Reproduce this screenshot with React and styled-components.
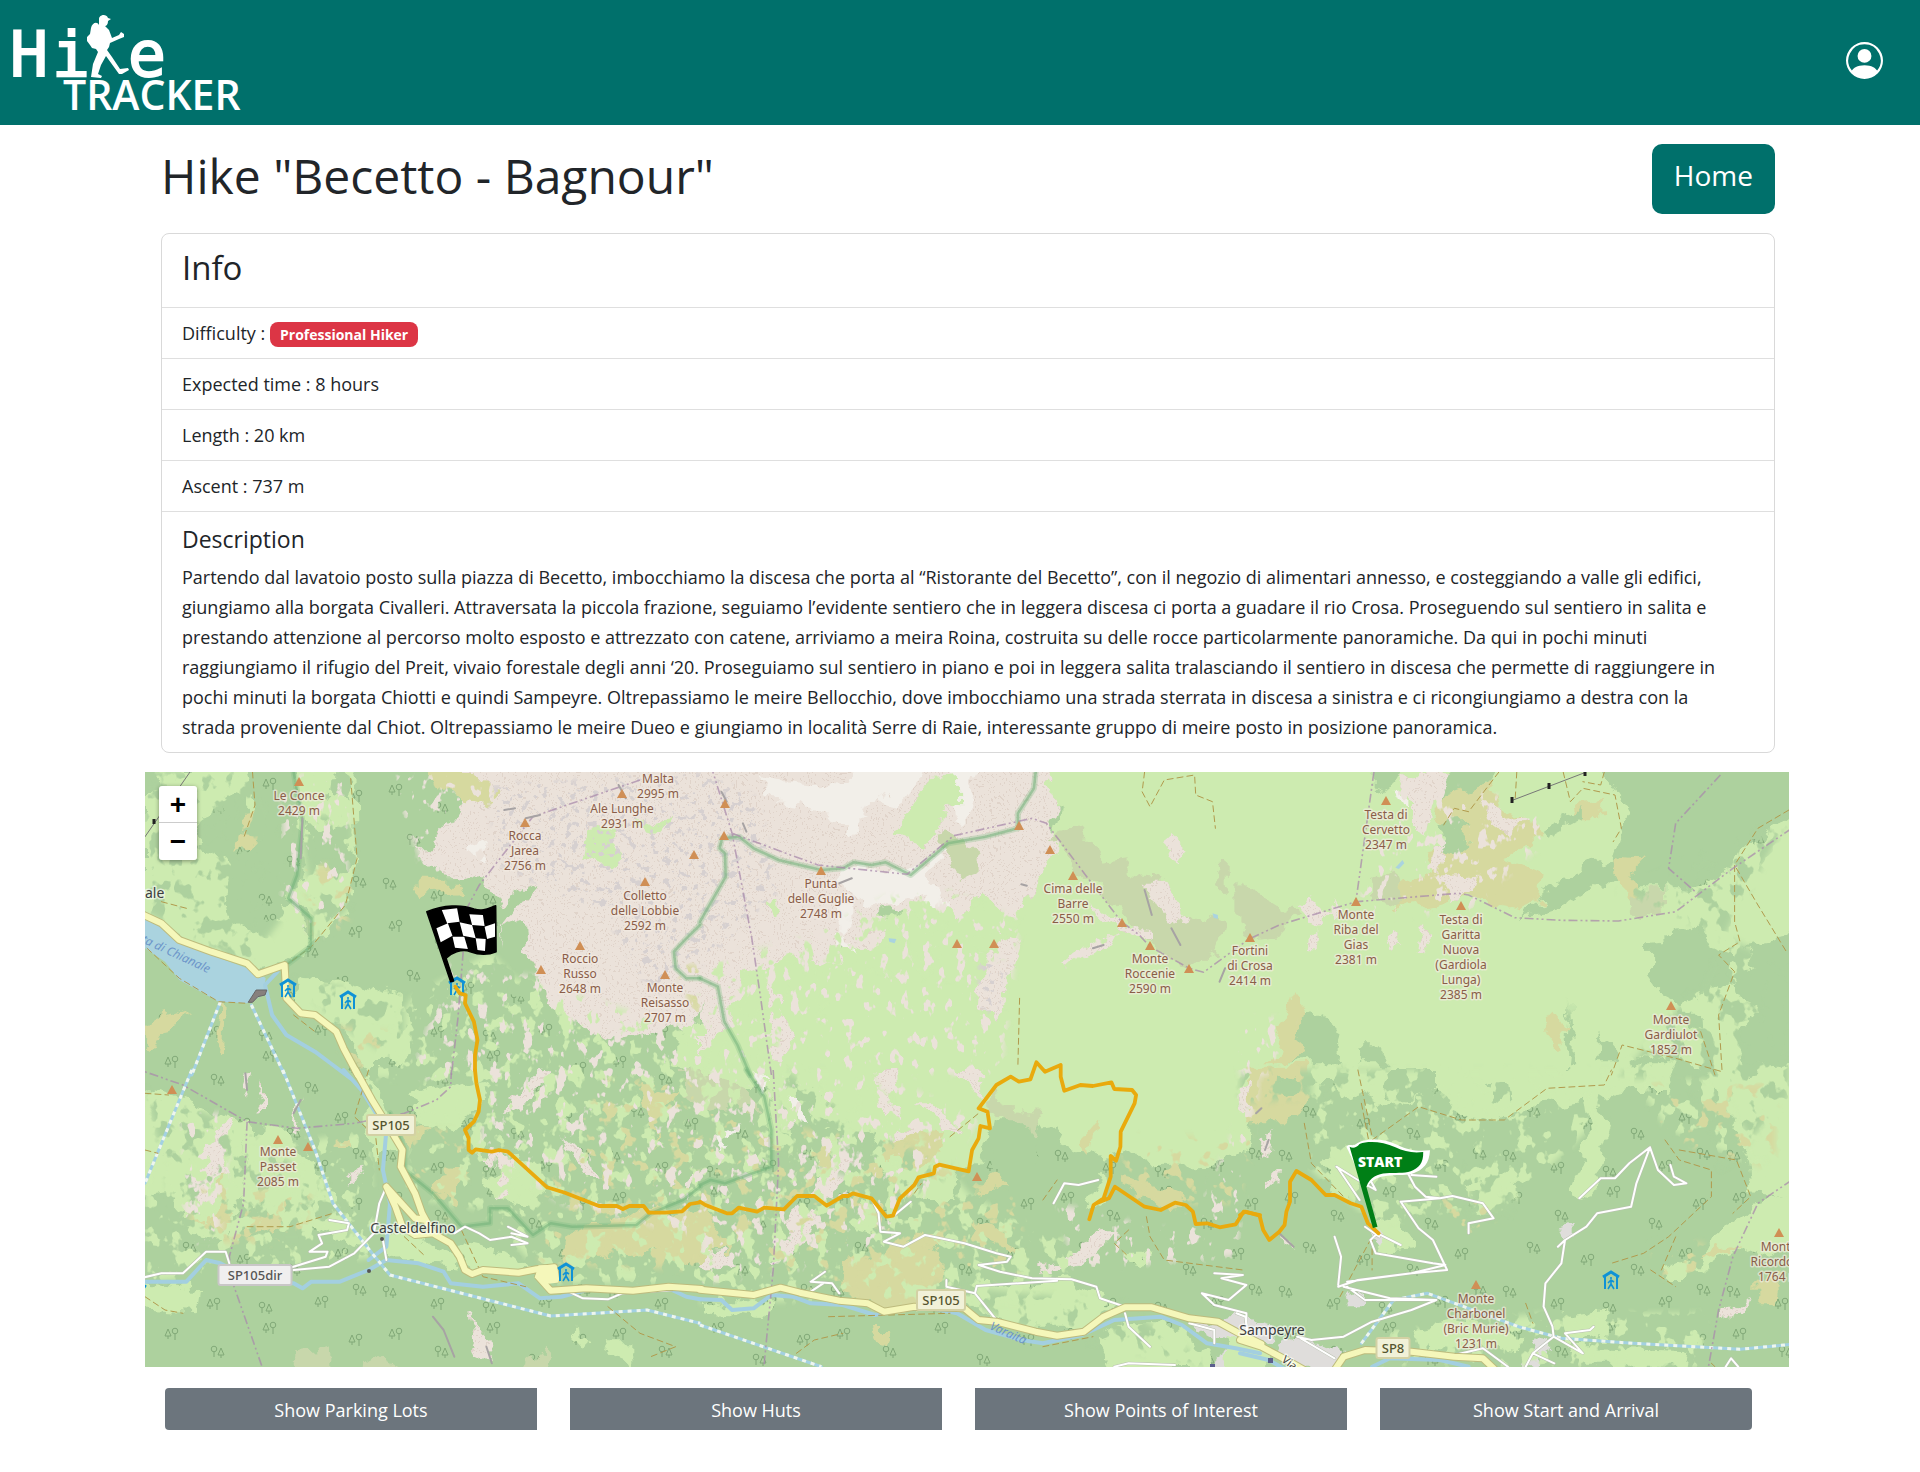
import React from "react";
import styled, { createGlobalStyle } from "styled-components";
import { BsPersonCircle } from "react-icons/bs";

const GlobalStyle = createGlobalStyle`
  *, *::before, *::after { box-sizing: border-box; }
  body {
    margin: 0;
    background: #fff;
    color: #212529;
    font-family: "Open Sans", "Noto Sans", sans-serif;
    font-size: 18px;
    line-height: 30px;
  }
`;

const TopBar = styled.header`
  display: flex;
  align-items: center;
  justify-content: space-between;
  height: 125px;
  padding: 0 37px 5px 14px;
  background: #00706b;
`;

const LogoLink = styled.a`
  display: block;
  line-height: 0;
`;

const LogoSvg = styled.svg`
  overflow: visible;
`;

const AccountButton = styled.button`
  display: flex;
  padding: 0;
  border: 0;
  background: none;
  color: #fff;
  cursor: pointer;
`;

const Page = styled.main`
  padding: 19px 131px 42px 145px;
  @media (max-width: 1100px) {
    padding: 19px 16px 42px;
  }
`;

const TitleRow = styled.div`
  display: flex;
  align-items: flex-start;
  justify-content: space-between;
  padding: 0 14px 0 16px;
`;

const Title = styled.h1`
  margin: 0;
  font-size: 48px;
  font-weight: 400;
  line-height: 64px;
`;

const HomeButton = styled.button`
  height: 70px;
  padding: 0 22px 8px;
  border: 0;
  border-radius: 10px;
  background: #00706b;
  color: #fff;
  font: inherit;
  font-size: 28px;
  cursor: pointer;
`;

const Card = styled.section`
  margin: 19px 14px 19px 16px;
  border: 1px solid #d9d9d9;
  border-radius: 8px;
`;

const CardRow = styled.div`
  padding: 10px 20px;
  border-top: ${(p) => (p.$first ? "0" : "1px solid #dfdfdf")};
`;

const CardTitle = styled.h2`
  margin: 0;
  padding: 3px 0 8px;
  font-size: 33px;
  font-weight: 400;
  line-height: 42px;
`;

const Badge = styled.span`
  display: inline-block;
  padding: 0 10px;
  border-radius: 8px;
  background: #dc3545;
  color: #fff;
  font-size: 14px;
  font-weight: 700;
  line-height: 25px;
`;

const SubTitle = styled.h3`
  margin: 0 0 8px;
  padding-top: 2px;
  font-size: 23px;
  font-weight: 400;
`;

const Description = styled.p`
  margin: 0;
  padding-right: 20px;
`;

const MapPanel = styled.section`
  position: relative;
  height: 595px;
  overflow: hidden;
`;

const ZoomBox = styled.div`
  position: absolute;
  top: 14px;
  left: 14px;
  display: flex;
  flex-direction: column;
  border-radius: 3px;
  overflow: hidden;
  box-shadow: 0 1px 4px rgba(0, 0, 0, 0.4);
`;

const ZoomButton = styled.button`
  width: 38px;
  height: 37px;
  padding: 0;
  border: 0;
  border-bottom: ${(p) => (p.$divided ? "1px solid #ccc" : "0")};
  background: #fff;
  color: #000;
  font: 700 28px/37px "Liberation Sans", sans-serif;
  cursor: pointer;
`;

const Toolbar = styled.div`
  display: grid;
  grid-template-columns: repeat(4, 1fr);
  gap: 33px;
  padding: 21px 37px 0 20px;
  @media (max-width: 1100px) {
    grid-template-columns: repeat(2, 1fr);
  }
`;

const ToolButton = styled.button`
  height: 42px;
  padding: 2px 0 0;
  border: 0;
  background: #6c757d;
  color: #fff;
  font: inherit;
  cursor: pointer;
  &:first-child { border-radius: 4px 0 0 4px; }
  &:last-child { border-radius: 0 4px 4px 0; }
`;

const MapSvg = styled.svg`
  display: block;
  width: 100%;
  height: 100%;
  font-family: "Noto Sans", "Open Sans", sans-serif;
`;

/* ---------- map data: six survey sheets, a to f ---------- */

const SHEETS = {
  a: [140, 765], b: [700, 765], c: [1240, 765],
  d: [140, 1070], e: [700, 1070], f: [1240, 1070],
};

const plot = (sheet, d) => {
  const [ox, oy] = SHEETS[sheet];
  return d.replace(/(-?\d+) (-?\d+)/g, (_, x, y) =>
    `${(ox + x / 2.8).toFixed(1)} ${(oy + y / 3).toFixed(1)}`);
};

const COLORS = {
  wood: "#add19e", grass: "#cdebb0", rock: "#ebe2da", bare: "#f2efe9",
  heath: "#d6d99f", scrub: "#c8d7ab", town: "#dfdddb", water: "#aad3df",
};

const AREAS = [
  ["a", "grass", "M0 0L310 0L330 130L300 215L305 100L270 85L190 135L150 210L190 255L260 280L235 400L255 470L300 490L370 480L400 420L440 430L480 540L400 600L330 610L160 540L0 440Z"],
  ["a", "wood", "M0 0L75 0L40 60L0 80Z"],
  ["a", "grass", "M425 0L600 0L605 300L570 450L480 540L480 450L420 400L455 300Z"],
  ["a", "wood", "M470 180L580 200L600 290L560 330L480 270Z"],
  ["a", "wood", "M545 30L590 60L580 120L540 90Z"],
  ["a", "grass", "M430 640L560 650L740 700L770 760L740 900L640 900L560 780L440 740Z"],
  ["a", "rock", "M820 0L1600 0L1600 560L1550 800L1500 780L1430 800L1300 830L1250 780L1150 740L1130 640L1060 620L1010 560L1000 430L960 350L800 300L780 260L840 200L880 150L900 90Z"],
  ["a", "heath", "M820 15L930 15L1000 90L980 120L900 110L830 60Z"],
  ["a", "heath", "M780 350L890 350L900 380L780 390Z"],
  ["a", "heath", "M285 160L330 150L310 240L270 270Z"],
  ["a", "heath", "M20 770L130 730L60 830L20 850Z"],
  ["a", "heath", "M225 720L240 720L235 890L215 880Z"],
  ["a", "grass", "M1255 190L1345 180L1335 300L1245 290Z"],
  ["a", "grass", "M1385 170L1490 160L1470 205L1400 195Z"],
  ["a", "wood", "M970 450L1090 350L1110 370L1010 500Z"],
  ["a", "wood", "M1010 500L1080 470L1090 600L1140 680L1060 700L1000 580Z"],
  ["a", "grass", "M1520 780L1600 780L1600 940L1500 900Z"],
  ["a", "bare", "M925 240L975 230L960 290L920 280Z"],
  ["b", "grass", "M0 640L120 600L400 550L600 400L960 330L1005 120L950 0L1600 0L1600 960L0 960Z"],
  ["b", "rock", "M0 0L960 0L1005 95L975 170L1000 230L960 330L880 460L830 430L800 380L720 460L660 400L600 440L520 420L510 520L470 560L400 540L380 600L250 580L110 620L100 760L0 880Z"],
  ["b", "rock", "M180 640L230 700L250 800L230 890L190 850Z"],
  ["b", "rock", "M790 600L840 500L900 530L860 650L830 765L780 730Z"],
  ["b", "bare", "M160 40L400 60L430 0L640 0L560 120L480 100L440 200L400 220L400 160L300 140L290 110L200 100Z"],
  ["b", "bare", "M400 310L440 300L540 320L620 310L690 250L640 330L690 430L660 430L620 380L540 400L500 430L410 390Z"],
  ["b", "bare", "M380 400L410 400L410 510L450 570L390 540Z"],
  ["b", "bare", "M700 0L780 0L740 170L715 170Z"],
  ["b", "grass", "M640 40L720 30L720 120L640 200L620 240L550 200L600 120Z"],
  ["b", "grass", "M190 410L225 400L225 450L200 470Z"],
  ["b", "scrub", "M650 200L700 190L780 260L780 320L740 350L700 310Z"],
  ["b", "scrub", "M980 220L1060 190L1130 290L1200 280L1200 320L1280 330L1330 440L1480 480L1440 580L1380 600L1260 540L1230 500L1100 340Z"],
  ["b", "scrub", "M1440 300L1490 290L1500 370L1600 390L1600 500L1510 460L1490 400L1440 370Z"],
  ["b", "rock", "M1250 350L1290 350L1370 460L1330 480L1290 430Z"],
  ["b", "rock", "M1320 205L1365 250L1345 300L1315 240Z"],
  ["b", "rock", "M1020 600L1100 540L1170 500L1150 540L1050 600L1030 620Z"],
  ["b", "rock", "M1090 400L1180 480L1260 500L1260 530L1180 500L1110 450Z"],
  ["c", "grass", "M-40 0L1030 0L1085 160L1060 260L1270 380L1600 100L1600 960L-40 960Z"],
  ["c", "scrub", "M-10 350L70 390L160 450L110 510L30 520L-10 490Z"],
  ["c", "wood", "M380 10L450 10L410 90L380 50Z"],
  ["c", "wood", "M590 10L720 10L660 110L560 110Z"],
  ["c", "wood", "M1020 0L1560 0L1560 120L1430 230L1380 300L1270 370L1100 370L1040 300L1060 240L1085 160L1060 90Z"],
  ["c", "wood", "M780 450L900 350L1060 260L1080 300L1000 370L900 430Z"],
  ["c", "heath", "M560 100L700 50L740 130L860 190L800 260L740 280L850 330L840 400L780 430L640 400L440 430L440 350L540 320L520 250L640 230L540 170Z"],
  ["c", "heath", "M950 110L1025 105L1020 160L930 160Z"],
  ["c", "heath", "M1030 280L1120 290L1090 330L1130 400L1090 400L1060 330Z"],
  ["c", "wood", "M540 180L640 170L630 280L580 270Z"],
  ["c", "wood", "M860 190L960 130L960 160L870 210Z"],
  ["c", "rock", "M440 25L590 25L570 90L540 100L520 215L490 200L490 100Z"],
  ["c", "bare", "M430 80L480 80L480 120L440 100Z"],
  ["c", "rock", "M555 330L660 320L650 380L600 420Z"],
  ["c", "rock", "M680 110L740 120L740 160L800 150L750 215L690 160Z"],
  ["c", "rock", "M545 240L580 240L560 320L530 310Z"],
  ["c", "rock", "M160 430L210 400L250 450L280 390L290 420L230 480L190 470Z"],
  ["c", "rock", "M190 520L220 490L215 550L185 550Z"],
  ["c", "rock", "M430 500L450 530L420 555L405 540Z"],
  ["c", "rock", "M510 490L530 500L510 560L500 550Z"],
  ["c", "scrub", "M360 340L430 310L450 420L370 400Z"],
  ["c", "scrub", "M1090 380L1190 370L1190 410L1120 480L1100 430Z"],
  ["c", "wood", "M1140 520L1230 510L1280 465L1305 550L1400 575L1380 640L1240 715L1180 680L1140 620Z"],
  ["c", "wood", "M1400 540L1560 510L1560 960L1430 960L1400 800L1440 740L1380 640L1450 600Z"],
  ["c", "heath", "M140 690L190 760L170 900L20 940L100 860Z"],
  ["c", "wood", "M185 740L290 800L270 940L60 960L160 870Z"],
  ["c", "wood", "M320 850L410 850L410 960L340 960Z"],
  ["c", "wood", "M930 700L937 940L912 940Z"],
  ["c", "wood", "M1010 800L1050 850L1060 940L1000 940Z"],
  ["c", "wood", "M1240 740L1290 740L1290 800L1250 790Z"],
  ["c", "wood", "M1100 870L1300 900L1340 960L1060 960Z"],
  ["c", "heath", "M845 760L880 740L925 800L880 855L850 810Z"],
  ["d", "grass", "M-20 40L120 90L260 150L300 170L290 380L240 520L150 500L120 440L-20 400Z"],
  ["d", "grass", "M300 170L420 190L520 330L640 540L480 480L360 440L290 400Z"],
  ["d", "wood", "M14 370L100 360L90 440L14 430Z"],
  ["d", "rock", "M150 330L220 160L260 150L240 260L190 380L140 460Z"],
  ["d", "rock", "M330 100L350 40L350 110L320 150Z"],
  ["d", "rock", "M430 170L450 90L440 180Z"],
  ["d", "rock", "M580 330L610 290L620 310L600 350Z"],
  ["d", "rock", "M290 10L315 10L300 75L285 40Z"],
  ["d", "heath", "M220 290L260 390L250 470L160 460L230 400Z"],
  ["d", "heath", "M545 200L605 195L600 225L545 225Z"],
  ["d", "heath", "M300 430L420 380L400 470L310 500Z"],
  ["d", "grass", "M740 70L960 30L980 80L880 180L780 170Z"],
  ["d", "grass", "M640 0L700 120L720 240L650 270L640 180Z"],
  ["d", "grass", "M700 480L880 560L890 590L700 565Z"],
  ["d", "grass", "M900 520L1060 560L1100 600L930 600Z"],
  ["d", "grass", "M1060 240L1150 350L1080 420L960 350Z"],
  ["d", "rock", "M960 250L1050 270L1030 370L1000 380L1000 300Z"],
  ["d", "rock", "M1010 130L1060 60L1110 0L1140 0L1100 70L1090 110Z"],
  ["d", "rock", "M1180 190L1250 260L1290 330L1260 330L1200 240Z"],
  ["d", "rock", "M1520 360L1568 300L1568 330L1530 390Z"],
  ["d", "heath", "M740 200L800 170L790 210L750 240Z"],
  ["d", "heath", "M820 320L910 310L880 400L820 360Z"],
  ["d", "heath", "M1200 500L1440 410L1600 440L1600 600L1400 540L1200 580Z"],
  ["d", "heath", "M1400 50L1440 20L1470 80L1500 60L1480 110L1440 120L1450 230Z"],
  ["d", "scrub", "M1520 0L1600 0L1600 120L1520 70Z"],
  ["d", "grass", "M-20 640L160 660L150 730L-20 720Z"],
  ["d", "scrub", "M400 900L450 850L530 835L530 900Z"],
  ["d", "scrub", "M620 900L670 860L740 900Z"],
  ["d", "scrub", "M1060 900L1140 830L1130 900Z"],
  ["d", "rock", "M910 725L950 780L970 800L985 880L950 860L930 820Z"],
  ["d", "grass", "M1215 770L1250 800L1240 830L1215 800Z"],
  ["d", "grass", "M1290 820L1370 820L1370 880L1300 850Z"],
  ["e", "grass", "M200 -20L1560 -20L1540 230L1450 290L1250 295L1210 240L1150 260L1080 240L1000 200L920 130L830 180L770 290L620 320L560 390L500 260L470 180L350 180L320 120L250 100L260 200L200 240Z"],
  ["e", "wood", "M260 50L330 60L320 120L270 110Z"],
  ["e", "scrub", "M-20 0L110 40L180 120L100 110L-20 130Z"],
  ["e", "scrub", "M800 110L830 60L860 120L960 130L940 190L840 160Z"],
  ["e", "wood", "M820 160L930 160L940 300L800 300Z"],
  ["e", "rock", "M500 0L540 0L550 150L600 180L610 200L540 215L510 130Z"],
  ["e", "rock", "M710 0L790 0L790 90L740 40Z"],
  ["e", "rock", "M610 100L670 100L720 180L690 180L650 130Z"],
  ["e", "rock", "M340 220L440 200L430 280L400 360L360 390L330 370Z"],
  ["e", "bare", "M150 10L200 10L190 70L170 50Z"],
  ["e", "bare", "M240 90L290 90L290 150L250 130Z"],
  ["e", "bare", "M40 210L100 170L90 200L40 230Z"],
  ["e", "rock", "M950 590L1040 560L1110 490L1160 490L1100 570L1040 590L960 600Z"],
  ["e", "rock", "M270 420L330 410L300 480L270 560L190 580L240 530Z"],
  ["e", "rock", "M0 550L100 540L100 590L0 600Z"],
  ["e", "heath", "M510 220L640 180L700 190L690 250L600 290L510 260Z"],
  ["e", "heath", "M0 440L60 460L90 540L20 540Z"],
  ["e", "heath", "M400 570L650 500L680 590L600 720L540 720L390 650Z"],
  ["e", "heath", "M780 340L840 310L875 340L780 390Z"],
  ["e", "heath", "M750 450L860 490L880 540L780 500Z"],
  ["e", "heath", "M1080 190L1110 150L1100 230L1070 250Z"],
  ["e", "heath", "M1170 320L1300 350L1380 390L1280 410L1180 350Z"],
  ["e", "heath", "M480 780L540 780L530 820L490 810Z"],
  ["e", "grass", "M560 310L720 300L710 390L640 390L570 360Z"],
  ["e", "grass", "M440 400L500 400L500 490L450 480Z"],
  ["e", "grass", "M1080 390L1130 290L1140 380L1090 410Z"],
  ["e", "grass", "M1190 545L1280 545L1240 590L1200 580Z"],
  ["e", "grass", "M640 660L1040 630L1110 680L1180 710L1060 770L900 770L800 740L760 690Z"],
  ["e", "grass", "M1100 800L1200 760L1300 760L1400 830L1430 900L1150 900Z"],
  ["e", "grass", "M0 700L200 700L180 750L0 730Z"],
  ["e", "town", "M1360 760L1500 740L1600 770L1600 820L1440 810Z"],
  ["e", "town", "M1440 860L1530 830L1560 900L1440 900Z"],
  ["f", "grass", "M-40 -20L1230 -20L1200 60L1100 60L960 90L800 110L730 150L600 130L560 60L400 110L300 60L200 20L-40 60Z"],
  ["f", "wood", "M400 0L560 0L560 70L420 90Z"],
  ["f", "wood", "M700 40L750 30L760 110L710 100Z"],
  ["f", "heath", "M30 -10L190 -10L200 90L130 160L20 160Z"],
  ["f", "wood", "M100 20L160 15L180 60L130 80L95 60Z"],
  ["f", "grass", "M1300 30L1560 -20L1560 380L1440 370L1430 250L1400 180L1350 100Z"],
  ["f", "grass", "M960 60L1040 180L1010 300L950 390L920 360L980 200Z"],
  ["f", "grass", "M640 350L760 280L770 380L720 440L650 400Z"],
  ["f", "grass", "M220 280L300 240L340 330L300 390L250 320Z"],
  ["f", "grass", "M360 460L440 430L480 530L400 540Z"],
  ["f", "grass", "M1310 520L1440 400L1560 360L1560 560L1450 530L1280 600Z"],
  ["f", "grass", "M1180 590L1260 570L1250 630L1200 630Z"],
  ["f", "heath", "M1290 550L1340 530L1390 550L1330 570Z"],
  ["f", "heath", "M1440 640L1520 600L1500 700L1440 700Z"],
  ["f", "rock", "M-10 60L40 20L30 110L0 130Z"],
  ["f", "rock", "M60 210L90 180L80 260L55 250Z"],
  ["f", "rock", "M90 310L115 310L110 350L85 350Z"],
  ["f", "rock", "M120 490L160 540L130 520Z"],
  ["f", "rock", "M1350 740L1420 670L1400 730L1350 770Z"],
  ["f", "grass", "M480 780L620 760L800 800L780 850L620 830L500 820Z"],
  ["f", "grass", "M900 740L1020 720L1010 800L920 830Z"],
  ["f", "grass", "M930 830L1250 840L1240 890L960 890Z"],
  ["f", "grass", "M-40 800L100 850L60 890L-40 890Z"],
  ["f", "town", "M170 805L290 840L260 890L130 890L100 830Z"],
  ["f", "town", "M300 670L350 660L350 700L310 700Z"],
  ["f", "town", "M360 500L390 490L400 520L370 520Z"],
  ["f", "town", "M900 480L940 465L940 490L910 500Z"],
  ["f", "town", "M820 820L860 800L860 850L800 890Z"],
];

const LAKES = [
  ["a", "M0 440L60 480L110 535L200 570L330 622L352 640L345 690L300 715L220 710L110 645L70 590L0 540Z"],
  ["b", "M528 520L550 522L545 535L530 530Z"],
  ["b", "M1435 445L1450 450L1450 462L1438 458Z"],
  ["c", "M455 285L460 295L445 312L435 308Z"],
  ["c", "M440 245L462 238L460 250L442 252Z"],
];

const GRASS_SPECKS = [
  ["a", "M1050 640L1568 800L1568 940L640 940L760 700L980 560Z"],
  ["b", "M0 600L300 520L520 400L700 380L900 470L880 560L700 640L500 620L100 940L0 940Z"],
  ["d", "M14 300L640 180L660 560L14 640ZM800 0L1568 0L1568 640L1150 640L960 420L740 380Z"],
  ["e", "M0 0L460 0L760 380L1000 500L1100 560L900 700L400 690L0 700Z"],
  ["f", "M200 0L1150 0L760 400L380 460L200 300Z M850 730L1300 730L1300 890L400 890L420 780Z"],
  ["f", "M1100 30L1330 30L1480 300L1200 180Z"],
];

const ROCK_SPECKS = [
  ["a", "M400 30L580 30L580 440L500 520L400 430ZM700 30L1000 30L1000 330L800 330ZM860 600L1568 700L1568 940L760 940Z"],
  ["b", "M100 560L720 400L900 420L840 930L0 930L0 760Z"],
  ["d", "M120 130L260 130L220 520L120 520ZM980 0L1568 0L1568 500L1180 400L950 240Z"],
  ["e", "M0 0L480 0L780 150L500 560L0 640Z M1000 400L1300 480L1400 420L1568 0L1500 560L1050 600Z"],
  ["c", "M0 760L150 760L80 930L0 930ZM440 40L860 120L860 220L640 440L320 460Z"],
];

const HEATH_SPECKS = [
  ["a", "M460 300L600 300L580 480L480 520ZM500 780L700 800L640 940ZM1500 600L1568 600L1568 800Z"],
  ["d", "M160 360L480 360L460 520L120 520ZM760 180L920 180L900 480L760 330ZM1300 30L1568 30L1568 600L1120 580L1120 380Z"],
  ["e", "M0 80L300 180L500 200L900 400L900 600L560 740L360 680L0 480Z M1180 200L1560 200L1500 400L1200 400Z"],
  ["f", "M560 380L720 380L700 500L560 470ZM1150 40L1500 40L1500 300L1180 200ZM1150 520L1300 520L1280 640L1180 620Z"],
];

const WOOD_SPECKS = [
  ["a", "M14 21L330 21L440 400L300 600L14 440ZM440 150L600 150L590 420L500 520Z"],
  ["a", "M430 640L740 700L740 900L560 780Z"],
  ["d", "M14 60L260 160L560 380L600 520L120 520Z"],
  ["e", "M240 0L480 180L720 300L600 380L220 260ZM640 640L1180 700L1430 890L900 770Z"],
  ["f", "M0 0L420 0L420 60L0 100ZM1250 0L1537 0L1537 80L1350 300ZM640 280L780 280L760 440L640 440Z"],
  ["c", "M1060 380L1537 160L1400 420L1300 640L1060 940L1537 940L1537 600Z"],
];

const SCREE_SPECKS = [
  ["a", "M980 60L1568 21L1568 560L1440 700L1300 450L1000 300Z"],
  ["b", "M0 21L160 100L220 380L0 600ZM780 580L860 580L840 760L780 720Z"],
];

const RIVERS = [
  ["a", "M385 620L350 660L370 750L410 810L490 860L540 900L590 940"],
  ["d", "M570 0L620 60L690 180L680 300L700 400L690 530L640 570"],
  ["d", "M0 635L130 635L185 570L225 580L330 640L430 640L455 655L480 635L560 635L640 600L690 570L780 580L850 605L870 640L960 650L1060 640L1120 685L1180 680L1250 660M1490 660L1530 680L1568 688"],
  ["e", "M0 688L60 690L90 720L150 715L200 675L260 680L310 700L400 705L490 735L600 705L720 730L800 780L900 810L960 820L1070 795L1160 750L1290 740L1350 765L1420 820L1500 835L1568 850"],
  ["f", "M0 850L80 870L130 900M370 890L420 865L560 870L640 890"],
];

const CANALS = [
  ["a", "M225 710L145 930M312 720L405 930"],
  ["d", "M145 0L14 340M400 0L490 240L540 400L650 550L700 615L1150 738L1420 720L1568 760"],
  ["e", "M0 765L340 890"],
  ["f", "M340 820L430 690L525 670L780 770L900 805L1100 820L1400 838L1545 823"],
];

const PARK_EDGE = [
  ["a", "M430 21L455 170L440 330L415 400L480 460L478 545L410 600L408 640M1568 480L1530 520L1495 560L1500 610L1530 640L1568 640"],
  ["b", "M0 470L72 335L70 265L55 250L62 220L110 215L150 250L220 285L340 315L400 310L430 292L480 300L520 292L590 330L695 235L800 215L890 190L890 145L935 70L942 0M0 640L50 665L68 770L105 840L140 930"],
  ["d", "M1568 350L1520 390L1430 430L1390 465L1210 470L1150 460L1100 495L1030 415L980 415L980 460L900 470L820 370L740 300L740 240L700 130"],
  ["e", "M130 0L180 80L200 180L200 290L120 320L70 340L30 330L0 345"],
];

const BORDERS = [
  ["a", "M1400 45L1100 155L1030 250L950 360L915 430M905 560L890 760L872 930"],
  ["b", "M30 0L90 205L145 520L170 700L200 930M90 205L330 300L580 328L710 212L930 160L970 175L1090 345L1180 470L1230 510L1260 545L1370 610L1410 622L1540 520"],
  ["c", "M30 520L110 480L325 410L610 385L640 390L770 458L900 466L1060 468L1220 440L1380 310L1545 190M375 21L325 405M1345 30L1220 175L1200 310L1280 385"],
  ["d", "M872 0L870 50L830 90L740 130L600 160L440 175L300 155L120 45L0 0M300 155L290 400L250 560L260 640L345 900"],
  ["e", "M205 0L220 280L205 600L178 900"],
  ["f", "M1545 330L1450 400L1380 560L1340 720L1310 900"],
];

const LANES = [
  ["d", "M0 625L60 610L120 610L185 545L240 545L250 580M430 600L530 590L600 550L655 490L670 400L690 350M400 600L520 560L525 545L475 545L510 520L500 495L580 480L585 460L530 450M680 510L690 570M880 490L910 470L950 490L980 510L1040 500L1085 520L1040 525M1040 490L1085 500L1030 470M1200 665L1240 685L1310 688L1350 670L1490 660"],
  ["e", "M480 385L500 430L505 485L560 490L515 515L570 530L630 495L740 520L830 550L870 560L860 575L780 585L840 605L930 625L1040 628L1110 650L1120 685L1190 710M1000 632L775 648L770 670M690 630L690 650L770 670L830 750M545 435L590 395M350 605L310 635L370 640L390 670M345 640L310 665M1440 610L1520 615L1460 625L1530 645L1480 690L1405 670L1440 705L1530 730L1530 790M990 400L1020 340L1060 345L1115 330M1160 890L1200 880L1330 885M1190 730L1200 770L1260 830M1370 760L1440 780L1440 820"],
  ["f", "M275 645L283 560L265 500M275 650L330 630L480 610L575 585L540 580L380 550L365 510L385 490L450 525M450 395L500 475L540 510L580 600L480 610L300 635M450 395L560 385L595 378L680 400L710 445L640 460L640 490M470 310L490 350L520 380L560 385M480 315L550 320M290 650L420 685L550 690M270 290L330 330L380 360L360 320M275 295L335 390M160 800L200 810L290 800L370 755L480 720L550 690M300 650L350 690L540 690M170 805L265 865M350 470L390 500M950 385L1010 325L1050 325L1090 280L1148 232L1170 300L1215 345L1250 340L1215 320L1205 285M1148 232L1110 340L1095 410L1000 430L970 470L910 510L900 580L855 640L850 710L875 770L878 800L820 850L800 890M890 530L910 510M878 800L960 850L910 790L980 780L990 770M600 855L680 835L750 890M820 850L880 880M1360 890L1375 865L1395 890M-10 730L15 740L20 780"],
];

const HIGHWAYS = [
  ["a", "M0 445L60 475L110 525L200 560L300 595L330 628L405 600L410 700L450 745L490 750L550 800L570 850L610 930"],
  ["d", "M603 0L650 90L690 160L735 240L730 290L770 370L790 430L820 490L870 520L895 560L910 600L930 612L960 600L1060 608L1110 598L1160 592L1165 628L1115 620L1150 662L1250 655L1380 662L1480 650L1572 657M690 350L715 410L735 470L770 495L820 490M690 350L770 445L800 450"],
  ["e", "M0 659L150 675L225 653L280 668L390 692L470 700L515 725L600 710L740 715L780 750L830 755L940 785L1000 797L1075 785L1130 740L1190 712L1265 712L1370 745L1450 755L1510 790L1572 822"],
  ["f", "M0 810L60 830L130 870L180 900M265 900L290 860L350 840L480 845L600 860L680 865L715 900"],
];

const TRACKS = [
  ["a", "M315 21L322 120L290 220M590 40L608 280L575 420L480 545L410 600M20 550L110 640L220 710L300 715M430 750L490 800M60 410L130 430"],
  ["b", "M1245 21L1238 80L1260 125L1300 45L1385 30L1388 90L1435 110L1443 190M895 700L890 900"],
  ["c", "M725 21L640 140L600 130L570 180M775 21L770 110M905 21L925 110L960 70L1050 90L1068 190L1045 230M1020 21L1010 60L960 50M1537 135L1450 190L1385 300L1385 470L1400 530L1340 570L1385 620L1340 750L1350 920L1220 880L1070 840L1040 930M1390 310L1450 420L1530 560M1290 800L1330 930"],
  ["d", "M14 70L80 75M14 240L50 250M300 470L420 470L540 430M640 0L600 140L660 200L670 300M900 480L960 620L1080 650M1310 710L1400 790L1500 830L1430 860M14 680L70 720L120 730M740 500L800 560"],
  ["e", "M1250 440L1260 500L1300 570L1520 600M1200 480L1160 520L1200 560M600 370L620 340M700 200L780 130M270 850L320 810L400 790M360 740L700 730M960 830L1100 800M960 390L1000 330"],
  ["f", "M180 160L200 280L290 380M330 0L370 200M1330 890L1320 880M370 210L500 110L620 150L740 150L860 55L1020 45L1040 0M340 100L360 210M1190 210L1230 270L1320 300L1320 380L1200 500L1130 550L1040 580M1230 240L1390 270L1430 380L1380 430M1150 600L1220 650M1180 600L1220 500M280 680L370 500L370 600M800 700L820 760"],
];

const POWER = [
  ["a", "M14 215L140 21"],
  ["c", "M765 105L968 22"],
];

const SCREE = [
  ["a", "M1080 160L1120 150M1020 135L1050 130M1340 60L1360 100M455 160L450 280"],
  ["b", "M60 80L75 110M120 175L130 200M390 355L425 340M1245 375L1265 450M1320 490L1345 540M1100 550L1130 540M900 358L915 362M1455 650L1470 610"],
  ["d", "M820 740L850 780L880 860M970 830L985 880M295 10L300 60M430 130L450 90"],
  ["f", "M110 490L150 530M45 130L60 115M70 240L80 210"],
];

const ROUTE = [
  ["a", "M883 665L895 685L912 690L910 715L935 770L945 825L938 870L938 915"],
  ["d", "M938 0L942 40L952 90L948 125L935 155L910 180L920 205L920 240L930 248L940 238L985 245L1005 240L1030 245L1140 352L1190 368L1285 408L1335 408L1352 417L1370 408L1410 408L1425 428L1470 428L1518 424L1540 402L1568 397"],
  ["e", "M0 395L15 405L75 430L90 430L108 413L160 425L180 413L235 418L272 378L320 378L355 407L400 378L415 378L428 370L480 385L522 440L540 437L560 385L600 345L612 322L655 310L658 290L670 284L752 304L762 240L780 205L785 168L812 175L805 125L780 115L830 45L870 20L893 35L925 28L942 -23L966 5L1010 -15L1010 20L1020 62L1065 45L1100 48L1152 37L1160 57L1210 60L1221 75L1217 100L1178 185L1177 230L1165 272L1150 258L1150 320L1130 385L1102 405L1090 448M1110 400L1145 385L1162 350L1245 410L1290 420L1330 398L1360 405L1380 425L1388 462L1420 460L1455 472L1500 463L1522 425L1568 435"],
  ["f", "M0 435L15 425L55 437L65 480L82 510L110 485L125 465L130 425L140 395L140 335L158 303L200 330L240 375L265 375L310 400L340 410L358 460L388 490"],
];

const PEAKS = [
  [299, 782, 796, ["Le Conce", "2429 m"]],
  [658, 0, 779, ["Malta", "2995 m"]],
  [622, 794, 809, ["Ale Lunghe", "2931 m"]],
  [525, 823, 836, ["Rocca", "Jarea", "2756 m"]],
  [645, 882, 896, ["Colletto", "delle Lobbie", "2592 m"]],
  [580, 946, 959, ["Roccio", "Russo", "2648 m"]],
  [665, 975, 988, ["Monte", "Reisasso", "2707 m"]],
  [821, 871, 884, ["Punta", "delle Guglie", "2748 m"]],
  [1073, 876, 889, ["Cima delle", "Barre", "2550 m"]],
  [1150, 946, 959, ["Monte", "Roccenie", "2590 m"]],
  [1250, 938, 951, ["Fortini", "di Crosa", "2414 m"]],
  [1386, 801, 815, ["Testa di", "Cervetto", "2347 m"]],
  [1356, 902, 915, ["Monte", "Riba del", "Gias", "2381 m"]],
  [1461, 906, 920, ["Testa di", "Garitta", "Nuova", "(Gardiola", "Lunga)", "2385 m"]],
  [1671, 1006, 1020, ["Monte", "Gardiulot", "1852 m"]],
  [278, 1140, 1152, ["Monte", "Passet", "2085 m"]],
  [1476, 1285, 1299, ["Monte", "Charbonel", "(Bric Murie)", "1231 m"]],
  [1779, 1233, 1247, ["Monte", "Ricordone", "1764 m"]],
];

const MINOR_PEAKS = [
  [541, 970], [694, 855], [725, 804], [724, 836], [1019, 826], [1050, 850],
  [957, 944], [994, 944], [1122, 923], [1189, 969], [308, 1147], [172, 1090], [977, 1177],
];

const HUTS = [[288, 988], [348, 1000], [457, 986], [566, 1272], [1611, 1280], [138, 1290]];

const SHIELDS = [
  [391, 1125, 48, "SP105", "#f1f1d8", "#d3d1a4"],
  [941, 1300, 48, "SP105", "#f1f1d8", "#d3d1a4"],
  [1393, 1348, 33, "SP8", "#f1f1d8", "#d3d1a4"],
  [255, 1275, 73, "SP105dir", "#f0efef", "#c9c7c7"],
];

const TREES = [
  [20, 12], [66, 30], [118, 6], [160, 38], [204, 18], [38, 62], [92, 74], [142, 84],
  [190, 68], [14, 106], [62, 118], [114, 122], [170, 116], [208, 104],
];

const CHECKS = "M845 435L888 430L895 470L860 475ZM922 448L960 450L965 483L930 480ZM830 490L862 475L875 512L842 532ZM895 472L930 480L940 520L905 512ZM965 485L994 475L994 515L972 522ZM875 515L908 515L918 552L882 548ZM940 520L968 522L966 558L945 555Z";

const Lines = ({ data, ...rest }) => (
  <g fill="none" strokeLinejoin="round" strokeLinecap="round" {...rest}>
    {data.map(([s, d], i) => <path key={i} d={plot(s, d)} />)}
  </g>
);

const Specks = ({ data, filter }) => (
  <g filter={`url(#${filter})`}>
    {data.map(([s, d], i) => <path key={i} d={plot(s, d)} />)}
  </g>
);

const BOUNDS = { filterUnits: "userSpaceOnUse", x: 145, y: 772, width: 1644, height: 595, colorInterpolationFilters: "sRGB" };

const SpeckFilter = ({ id, rgb, freq, seed, cut }) => (
  <filter id={id} {...BOUNDS}>
    <feTurbulence type="fractalNoise" baseFrequency={freq} numOctaves="3" seed={seed} result="n" />
    <feColorMatrix in="n" type="matrix"
      values={`0 0 0 0 ${rgb[0] / 255} 0 0 0 0 ${rgb[1] / 255} 0 0 0 0 ${rgb[2] / 255} 16 0 0 0 ${-16 * cut}`} result="c" />
    <feGaussianBlur in="SourceAlpha" stdDeviation="3" result="s" />
    <feComposite in="c" in2="s" operator="in" />
  </filter>
);

const TrailMap = () => (
  <MapSvg viewBox="145 772 1644 595" preserveAspectRatio="xMidYMid slice" role="img" aria-label="Trail map">
    <defs>
      <filter id="organic" {...BOUNDS}>
        <feTurbulence type="fractalNoise" baseFrequency="0.045" numOctaves="4" seed="8" result="n" />
        <feDisplacementMap in="SourceGraphic" in2="n" scale="26" xChannelSelector="R" yChannelSelector="G" />
      </filter>
      <SpeckFilter id="grassSpecks" rgb={[205, 235, 176]} freq="0.07 0.06" seed={3} cut={0.57} />
      <SpeckFilter id="rockSpecks" rgb={[235, 226, 218]} freq="0.09 0.06" seed={14} cut={0.62} />
      <SpeckFilter id="heathSpecks" rgb={[214, 217, 159]} freq="0.06 0.06" seed={21} cut={0.61} />
      <SpeckFilter id="woodSpecks" rgb={[173, 209, 158]} freq="0.06 0.05" seed={31} cut={0.55} />
      <SpeckFilter id="screeSpecks" rgb={[214, 208, 208]} freq="0.14" seed={5} cut={0.61} />
      <pattern id="trees" width="224" height="136" patternUnits="userSpaceOnUse" patternTransform="translate(145 772)">
        <g fill="none" stroke="#81a877" strokeWidth="1">
          {TREES.map(([x, y], i) => (
            <g key={i} transform={`translate(${x} ${y})`}>
              <circle cx={i % 2 ? 3 : 10} cy="3" r="2.8" />
              <path d={i % 2 ? "M3 6V11M10 2L7 9H13ZM10 9V12" : "M10 6V12M3 1L0 8H6ZM3 8V11"} />
            </g>
          ))}
        </g>
      </pattern>
      <pattern id="stipple" width="9" height="8" patternUnits="userSpaceOnUse">
        <path d="M1 1h1M5 3h1M3 6h1M8 6h1" stroke="#d5c5ba" strokeWidth="1" />
      </pattern>
    </defs>

    <rect x="145" y="772" width="1644" height="595" fill={COLORS.wood} />
    <rect x="145" y="772" width="1644" height="595" fill="url(#trees)" />
    <g filter="url(#organic)">
      {AREAS.map(([s, kind, d], i) => (
        <React.Fragment key={i}>
          <path d={plot(s, d)} fill={COLORS[kind]} />
          {kind === "rock" && <path d={plot(s, d)} fill="url(#stipple)" />}
        </React.Fragment>
      ))}
    </g>
    <Specks data={WOOD_SPECKS} filter="woodSpecks" />
    <Specks data={GRASS_SPECKS} filter="grassSpecks" />
    <Specks data={HEATH_SPECKS} filter="heathSpecks" />
    <Specks data={ROCK_SPECKS} filter="rockSpecks" />
    <Specks data={SCREE_SPECKS} filter="screeSpecks" />

    <g fill={COLORS.water}>
      {LAKES.map(([s, d], i) => <path key={i} d={plot(s, d)} />)}
    </g>
    <Lines data={RIVERS} stroke="#a3cfe0" strokeWidth="4" />
    <Lines data={CANALS} stroke="#a3d1e2" strokeWidth="3" />
    <Lines data={CANALS} stroke="#eef6ee" strokeWidth="3" strokeDasharray="4 5" strokeLinecap="butt" />
    <Lines data={TRACKS} stroke="#b19a4d" strokeWidth="1" strokeDasharray="6 4" />
    <Lines data={PARK_EDGE} stroke="#7cb982" strokeOpacity="0.3" strokeWidth="6" />
    <Lines data={PARK_EDGE} stroke="#70b077" strokeOpacity="0.5" strokeWidth="2.5" />
    <Lines data={BORDERS} stroke="#a98bab" strokeOpacity="0.75" strokeWidth="1.6" strokeDasharray="9 3 2 3 2 3" strokeLinecap="butt" />
    <Lines data={SCREE} stroke="#a7a3a4" strokeWidth="2" />
    <Lines data={POWER} stroke="#777" strokeWidth="1" />
    <path d="M1512 797v6M1549 783v6M1585 771v5M154 819v5" stroke="#222" strokeWidth="3" />
    <Lines data={LANES} stroke="#b9bfb0" strokeWidth="3" />
    <Lines data={LANES} stroke="#fff" strokeWidth="2" />
    <Lines data={HIGHWAYS} stroke="#bdbb7d" strokeWidth="8" />
    <Lines data={HIGHWAYS} stroke="#f5f7ba" strokeWidth="6" />
    <path d={plot("d", "M1120 592L1160 590L1166 632L1145 635L1112 620Z")} fill="#f5f7ba" stroke="#f5f7ba" strokeWidth="4" />
    <path d={plot("a", "M303 712L325 675L355 675L350 690L330 695L315 712Z")} fill="#87807d" stroke="#666" />
    <circle cx="382" cy="1239" r="2" fill="#555" />
    <circle cx="369" cy="1271" r="2" fill="#555" />
    <path d="M1210 1364h5v4h-5zM1268 1358h5v5h-5z" fill="#5b5f8d" />

    <g fontSize="12" fill="#8a5d48" stroke="#f4ede4" strokeOpacity="0.65" strokeWidth="3" paintOrder="stroke" strokeLinejoin="round" textAnchor="middle">
      {PEAKS.map(([x, , y, lines], i) => (
        <text key={i}>
          {lines.map((t, j) => <tspan key={j} x={x} y={y + 4 + j * 15}>{t}</tspan>)}
        </text>
      ))}
    </g>
    <g fill="#d08f55">
      {[...PEAKS, ...MINOR_PEAKS].filter((p) => p[1]).map(([x, y], i) => (
        <path key={i} d={`M${x} ${y - 5}L${x + 5} ${y + 4}H${x - 5}Z`} />
      ))}
    </g>
    <g fontSize="13" fill="#3d3d3d" stroke="#fff" strokeOpacity="0.6" strokeWidth="3" paintOrder="stroke" strokeLinejoin="round">
      <text x="145" y="898" fontSize="14">ale</text>
      <text x="413" y="1233" textAnchor="middle" fontSize="14">Casteldelfino</text>
      <text x="1272" y="1335" textAnchor="middle" fontSize="14">Sampeyre</text>
      <text x="1281" y="1361" fontSize="11" transform="rotate(38 1281 1361)">Via C</text>
    </g>
    <g fontSize="12" fontStyle="italic" fill="#6c95c9">
      <text x="141" y="942" transform="rotate(25 141 942)">ta di Chianale</text>
      <text x="989" y="1329" transform="rotate(24 989 1329)">Varaita</text>
    </g>
    <g fontSize="13" textAnchor="middle">
      {SHIELDS.map(([x, y, w, t, fill, edge], i) => (
        <g key={i}>
          <rect x={x - w / 2} y={y - 10} width={w} height="20" rx="2" fill={fill} stroke={edge} strokeWidth="2" />
          <text x={x} y={y + 5} fill={fill === "#f0efef" ? "#555" : "#55552f"} fontWeight="500">{t}</text>
        </g>
      ))}
    </g>
    <g fill="none" stroke="#0f92d6">
      {HUTS.map(([x, y], i) => (
        <g key={i} transform={`translate(${x} ${y})`}>
          <path d="M-8 -3L0 -8L8 -3" strokeWidth="3" />
          <path d="M-6 -4V9M6 -4V9" strokeWidth="2" />
          <path d="M0 -3V-1M0 0V4L-3 9M0 4L3 9M-3 3L0 0L3 2" strokeWidth="1.6" />
        </g>
      ))}
    </g>

    <Lines data={ROUTE} stroke="#e9aa0d" strokeWidth="3.8" />

    <path d={plot("a", "M803 440C850 420 900 418 935 432C960 440 975 430 996 422L997 560C970 572 945 568 925 560C900 550 870 565 857 580L878 648L870 650Z")} stroke="#000" strokeWidth="1.5" strokeLinejoin="round" />
    <path d={plot("a", CHECKS)} fill="#fff" />
    <path d={plot("f", "M298 230C305 220 315 230 325 222C345 205 400 202 440 224C470 240 495 245 532 241C530 280 515 300 480 312C440 320 380 305 358 350L350 350Z")} fill="#fff" />
    <path d={plot("f", "M307 230C315 235 325 235 335 222C360 212 400 215 435 232C460 245 485 250 513 246C514 280 500 295 478 304C440 318 375 290 354 350L385 470L372 474Z")} fill="#007f16" />
    <text x="1358" y="1167" fontFamily="Open Sans, sans-serif" fontWeight="800" fontSize="14" fill="#fff">START</text>
  </MapSvg>
);

const Logo = () => (
  <LogoSvg width="226" height="106" viewBox="14 6 226 106" aria-hidden="true" fill="#fff">
    <g fontFamily="DejaVu Sans Mono, monospace" fontSize="63" stroke="#fff" strokeWidth="2">
      <text x="10" y="75">H</text>
      <text x="52" y="75">i</text>
      <text x="128" y="75">e</text>
    </g>
    <text x="63" y="109" fontFamily="Open Sans, sans-serif" fontWeight="600" fontSize="41">TRACKER</text>
    <path d="M99 18C99 14 106 12 108 17L111 18L108 20C108 24 106 25 105 25L109 29L112 37L119 34L121 31L124 33L124 36L119 38L110 42L109 46L107 49L112 56L120 68L128 67L129 69L122 73L119 73L106 55L101 64L98 73L102 75L101 77L91 76L93 63L98 51L96 48L92 47L90 44L87 40L87 36L90 33L91 27C92 22 97 20 99 24Z" />
  </LogoSvg>
);

export default function App() {
  return (
    <>
      <GlobalStyle />
      <TopBar>
        <LogoLink href="#" aria-label="Hike Tracker"><Logo /></LogoLink>
        <AccountButton aria-label="Account"><BsPersonCircle size={37} /></AccountButton>
      </TopBar>
      <Page>
        <TitleRow>
          <Title>Hike "Becetto - Bagnour"</Title>
          <HomeButton>Home</HomeButton>
        </TitleRow>
        <Card>
          <CardRow $first><CardTitle>Info</CardTitle></CardRow>
          <CardRow>Difficulty : <Badge>Professional Hiker</Badge></CardRow>
          <CardRow>Expected time : 8 hours</CardRow>
          <CardRow>Length : 20 km</CardRow>
          <CardRow>Ascent : 737 m</CardRow>
          <CardRow>
            <SubTitle>Description</SubTitle>
            <Description>
              Partendo dal lavatoio posto sulla piazza di Becetto, imbocchiamo la discesa che porta al “Ristorante del Becetto”, con il negozio di alimentari annesso, e costeggiando a valle gli edifici, giungiamo alla borgata Civalleri. Attraversata la piccola frazione, seguiamo l’evidente sentiero che in leggera discesa ci porta a guadare il rio Crosa. Proseguendo sul sentiero in salita e prestando attenzione al percorso molto esposto e attrezzato con catene, arriviamo a meira Roina, costruita su delle rocce particolarmente panoramiche. Da qui in pochi minuti raggiungiamo il rifugio del Preit, vivaio forestale degli anni ‘20. Proseguiamo sul sentiero in piano e poi in leggera salita tralasciando il sentiero in discesa che permette di raggiungere in pochi minuti la borgata Chiotti e quindi Sampeyre. Oltrepassiamo le meire Bellocchio, dove imbocchiamo una strada sterrata in discesa a sinistra e ci ricongiungiamo a destra con la strada proveniente dal Chiot. Oltrepassiamo le meire Dueo e giungiamo in località Serre di Raie, interessante gruppo di meire posto in posizione panoramica.
            </Description>
          </CardRow>
        </Card>
        <MapPanel aria-label="Map">
          <TrailMap />
          <ZoomBox>
            <ZoomButton $divided aria-label="Zoom in">+</ZoomButton>
            <ZoomButton aria-label="Zoom out">−</ZoomButton>
          </ZoomBox>
        </MapPanel>
        <Toolbar>
          <ToolButton>Show Parking Lots</ToolButton>
          <ToolButton>Show Huts</ToolButton>
          <ToolButton>Show Points of Interest</ToolButton>
          <ToolButton>Show Start and Arrival</ToolButton>
        </Toolbar>
      </Page>
    </>
  );
}
